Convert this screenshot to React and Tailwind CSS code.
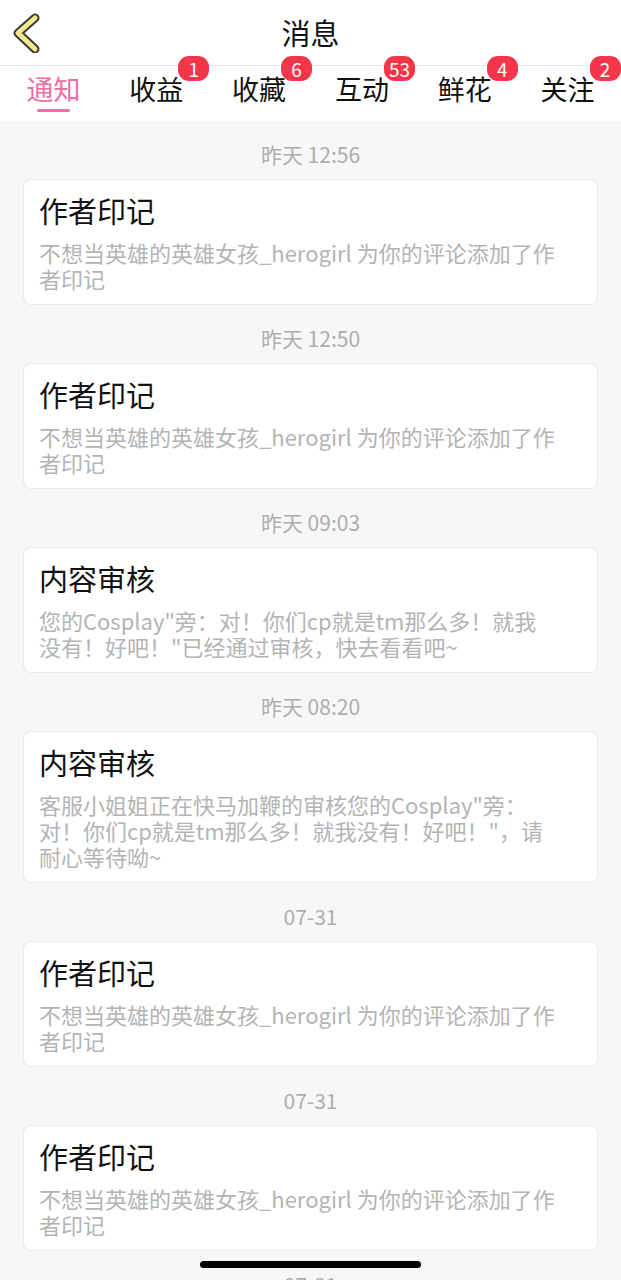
import React from "react";

const tabs = [
  { label: "通知", active: true },
  { label: "收益", badge: "1" },
  { label: "收藏", badge: "6" },
  { label: "互动", badge: "53" },
  { label: "鲜花", badge: "4" },
  { label: "关注", badge: "2" },
];

const yinji = ["不想当英雄的英雄女孩_herogirl 为你的评论添加了作", "者印记"];

const messages = [
  { time: "昨天 12:56", title: "作者印记", lines: yinji },
  { time: "昨天 12:50", title: "作者印记", lines: yinji },
  {
    time: "昨天 09:03",
    title: "内容审核",
    lines: ['您的Cosplay"旁：对！你们cp就是tm那么多！就我', '没有！好吧！"已经通过审核，快去看看吧~'],
  },
  {
    time: "昨天 08:20",
    title: "内容审核",
    lines: [
      '客服小姐姐正在快马加鞭的审核您的Cosplay"旁：',
      '对！你们cp就是tm那么多！就我没有！好吧！"，请',
      "耐心等待呦~",
    ],
  },
  { time: "07-31", title: "作者印记", lines: yinji },
  { time: "07-31", title: "作者印记", lines: yinji },
  { time: "07-31", title: "作者印记", lines: yinji },
];

function BackIcon() {
  return (
    <svg width="30" height="40" viewBox="0 0 30 40" className="ml-[12px]">
      <polyline points="23,5 6,20 23,36" fill="none" stroke="#3b3b3b" strokeWidth="9" strokeLinecap="round" strokeLinejoin="round" />
      <polyline points="23,5 6,20 23,36" fill="none" stroke="#f2ea8a" strokeWidth="5" strokeLinecap="round" strokeLinejoin="round" />
    </svg>
  );
}

export default function App() {
  return (
    <div
      className="relative h-[1280px] w-full overflow-hidden bg-[#f7f7f7]"
      style={{ fontFamily: '"Noto Sans CJK SC", "Noto Sans", sans-serif' }}
    >
      {/* Header */}
      <div className="flex h-[66px] items-center border-b border-[#e8e8e8] bg-white">
        <div className="w-[70px] pt-[1px]">
          <BackIcon />
        </div>
        <div className="flex-1 text-center text-[29px] leading-none text-[#111]">消息</div>
        <div className="w-[70px]" />
      </div>

      {/* Tabs */}
      <div className="grid h-[55px] grid-cols-6 bg-white px-[2px]">
        {tabs.map((t) => (
          <div key={t.label} className="relative flex flex-col items-center pt-[5px]">
            <span
              className={`relative text-[27px] leading-[36px] ${t.active ? "text-[#ee6ea3]" : "text-[#111]"}`}
            >
              {t.label}
              {t.badge && (
                <span className="absolute left-full top-[-15px] -ml-[5px] flex h-[25px] min-w-[31px] items-center justify-center rounded-[11px] bg-[#f5364a] px-[5px] text-[19px] leading-none text-white">
                  {t.badge}
                </span>
              )}
            </span>
            {t.active && <div className="mt-[2px] h-[3px] w-[33px] rounded-full bg-[#ee6ea3]" />}
          </div>
        ))}
      </div>

      {/* Message list */}
      <div className="flex flex-col px-[23px]">
        {messages.map((m, i) => (
          <div key={i}>
            <div className="pb-[13px] pt-[21px] text-center text-[21px] leading-[24px] text-[#adadad]">{m.time}</div>
            <div className="rounded-[8px] border border-[#ebebeb] bg-white px-[15px] pb-[13px] pt-[12px]">
              <div className="text-[29px] leading-[37px] text-[#111]">{m.title}</div>
              <div className="mt-[10px] text-[22px] leading-[26px] text-[#b4b4b4]">
                {m.lines.map((l, j) => (
                  <div key={j} className="whitespace-nowrap">
                    {l}
                  </div>
                ))}
              </div>
            </div>
          </div>
        ))}
      </div>

      {/* Home indicator */}
      <div className="absolute bottom-[12px] left-[200px] h-[7px] w-[221px] rounded-full bg-black" />
    </div>
  );
}
